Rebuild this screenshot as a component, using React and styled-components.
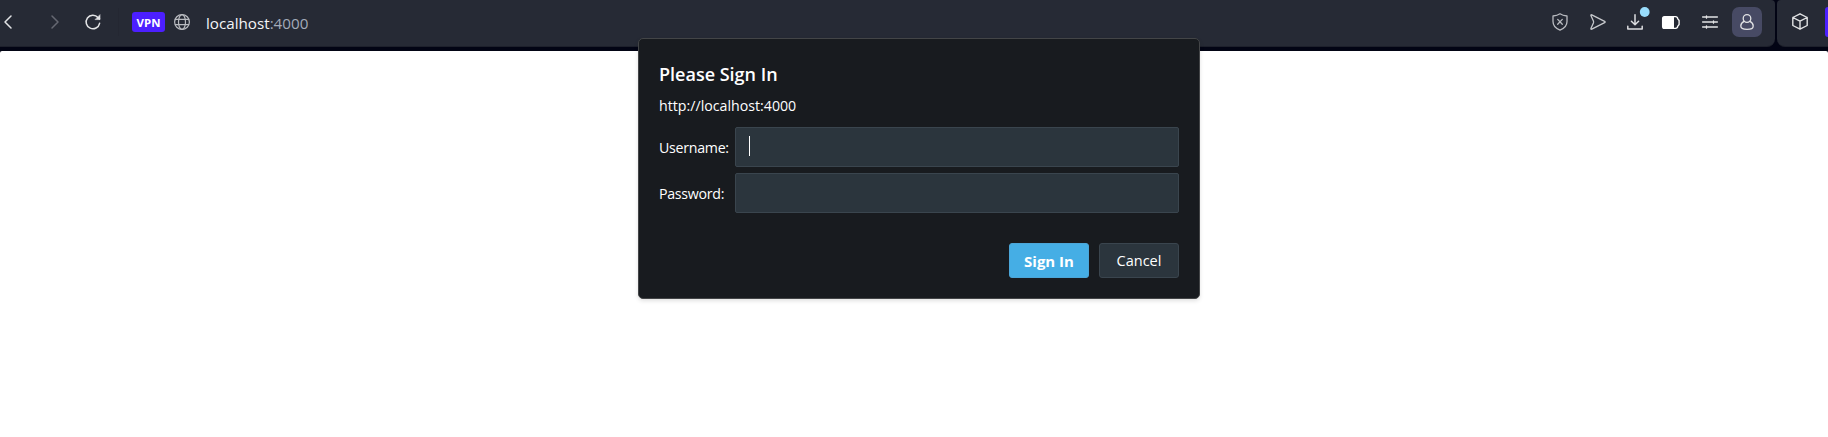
import React from "react";
import styled, { createGlobalStyle } from "styled-components";

const GlobalStyle = createGlobalStyle`
  * { box-sizing: border-box; }
  body { margin: 0; background: #fff; overflow: hidden; }
  button { font: inherit; }
`;

const Window = styled.div`
  position: relative;
  width: 100%;
  height: 437px;
  background: #020414;
  font-family: "Open Sans", "Noto Sans", sans-serif;
  overflow: hidden;
`;

const Page = styled.main`
  height: 386px;
  background: #fff;
  border-radius: 2px 2px 0 0;
`;

const Chrome = styled.header`
  display: flex;
  gap: 2px;
  height: 51px;
  padding-bottom: 4px;
  background: #020414;
`;

const Toolbar = styled.div`
  display: flex;
  flex: 1;
  justify-content: space-between;
  height: 47px;
  padding-right: 13px;
  background: #262a35;
  border-bottom: 1px solid #1d202b;
  border-radius: 0 4px 8px 0;
`;

const SidePanel = styled.div`
  display: flex;
  align-items: center;
  justify-content: space-between;
  width: 51px;
  height: 47px;
  padding: 0 0 3px 14px;
  background: #262a35;
  border-bottom: 1px solid #1d202b;
  border-radius: 4px 0 0 8px;
`;

const PurpleTab = styled.div`
  width: 3px;
  height: 30px;
  border-radius: 3px 0 0 3px;
  background: #4c1fff;
`;

const Group = styled.div`
  display: flex;
  align-items: center;
  height: 44px;
`;

const IconButton = styled.span`
  display: flex;
  align-items: center;
  justify-content: center;
  width: ${(p) => p.$w || 20}px;
  height: ${(p) => (p.$active ? 30 : 20)}px;
  margin-left: ${(p) => p.$gap || 0}px;
  color: ${(p) => p.$color || "#e2e3e5"};
  background: ${(p) => (p.$active ? "#474a64" : "transparent")};
  border-radius: 7px;
  svg { display: block; flex: none; overflow: visible; }
`;

const Divider = styled.span`
  width: 1px;
  height: 28px;
  margin-left: 16px;
  background: #242732;
`;

const VpnBadge = styled.span`
  width: 33px;
  height: 20px;
  margin-left: 13px;
  border-radius: 3px;
  background: #4c1fff;
  color: #fff;
  font-size: 11.4px;
  font-weight: 700;
  line-height: 22px;
  text-align: center;
`;

const Address = styled.span`
  margin-left: 16px;
  padding-top: 2px;
  color: #f4f5f7;
  font-size: 15.2px;
  line-height: 22px;
  span { color: #a3abb9; }
`;

const Dialog = styled.form`
  position: absolute;
  left: 638px;
  top: 38px;
  width: 562px;
  height: 261px;
  padding: 22px 20px 0 20px;
  border: 1px solid #434547;
  border-radius: 5px;
  background: #181b1f;
  color: #fff;
  box-shadow: 0 2px 4px rgba(0, 0, 0, 0.12);
`;

const Title = styled.h1`
  margin: 0;
  font-size: 18px;
  font-weight: 600;
  line-height: 26px;
`;

const Origin = styled.p`
  margin: 7px 0 10px;
  font-size: 14.2px;
  line-height: 23px;
`;

const Field = styled.label`
  display: flex;
  align-items: center;
  height: 40px;
  margin-bottom: 6px;
`;

const FieldName = styled.span`
  width: 76px;
  font-size: 14.2px;
  letter-spacing: -0.28px;
  white-space: nowrap;
`;

const FieldBox = styled.span`
  display: flex;
  flex: 1;
  height: 40px;
  padding: 8px 13px;
  border: 1px solid #3a454e;
  border-radius: 2px;
  background: #2b353d;
`;

const Caret = styled.span`
  width: 1px;
  height: 20px;
  background: #fff;
`;

const Actions = styled.div`
  display: flex;
  justify-content: flex-end;
  gap: 10px;
  margin-top: 30px;
`;

const Button = styled.button`
  width: 80px;
  height: 35px;
  padding: 0;
  border: 1px solid ${(p) => (p.$primary ? "#4ba6d8" : "#3a454e")};
  border-radius: 3px;
  background: ${(p) => (p.$primary ? "#45aee5" : "#2b353d")};
  color: #fff;
  font-size: ${(p) => (p.$primary ? 15 : 14.5)}px;
  font-weight: ${(p) => (p.$primary ? 700 : 400)};
`;

const Svg = ({ w, h, sw = 1.3, children }) => (
  <svg width={w} height={h} viewBox={`0 0 ${w} ${h}`} fill="none" stroke="currentColor" strokeWidth={sw} strokeLinecap="round" strokeLinejoin="round">
    {children}
  </svg>
);

const Back = () => <Svg w={8} h={14} sw={1.5}><path d="M7 1 1 7l6 6" /></Svg>;
const Forward = () => <Svg w={8} h={14} sw={1.5}><path d="m1 1 6 6-6 6" /></Svg>;
const Reload = () => (
  <Svg w={16} h={16} sw={1.5}>
    <path d="M14.6 9.3A6.8 6.8 0 1 1 13 3.4l1.5 1.5" />
    <path d="M15 1v4.6h-4.6z" fill="currentColor" strokeWidth="0.6" />
  </Svg>
);
const Globe = () => (
  <Svg w={16} h={16} sw={1.2}>
    <circle cx="8" cy="8" r="7.4" />
    <ellipse cx="8" cy="8" rx="3.5" ry="7.4" />
    <path d="M1.4 5.3h13.2M1.4 10.7h13.2" />
  </Svg>
);
const Shield = () => (
  <Svg w={16} h={18}>
    <path d="M8 .8c2 1.4 4.4 2 7 2.2v5.6c0 4-2.8 7-7 8.6C3.8 15.6 1 12.6 1 8.6V3C3.6 2.8 6 2.2 8 .8z" />
    <path d="m5.7 6.4 4.6 4.8m0-4.8-4.6 4.8" />
  </Svg>
);
const Send = () => (
  <Svg w={16} h={16}>
    <path d="M1.8.8 14.6 7.3q1.1.7 0 1.4L1.8 15.2q-1.3.4-.8-1L3.4 9q.4-1 0-2L1 1.8Q.5.4 1.8.8z" />
  </Svg>
);
const Download = () => (
  <Svg w={16} h={16} sw={1.5}>
    <path d="M8 .8v9.7M4.4 7.2 8 10.8l3.6-3.6M.8 12.2v2.9h14.4v-2.9" />
    <circle cx="17.7" cy="-2" r="4.9" fill="#99ddfc" stroke="none" />
  </Svg>
);
const Battery = () => (
  <Svg w={18} h={13}>
    <path d="M2.5.6h11q2 0 2.3 2.2l1.3 1.7v4l-1.3 1.7q-.3 2.2-2.3 2.2h-11Q.6 12.4.6 10.5v-8Q.6.6 2.5.6z" />
    <path d="M2.5.6H12v11.800H2.5Q.6 12.4.6 10.5v-8Q.6.6 2.5.6z" fill="currentColor" stroke="none" />
  </Svg>
);
const Sliders = () => (
  <Svg w={16} h={14}>
    <path d="M.6 2h14.8M.6 7h14.8M.6 12h14.8M4.5.8v2.4M11.5 5.8v2.4M4.5 10.8v2.4" />
  </Svg>
);
const Person = () => (
  <Svg w={14} h={16}>
    <circle cx="7" cy="4.5" r="3.8" />
    <path d="M4 7.4C2 8.4.8 10 .8 12c0 2.5 1.7 3.3 6.2 3.3s6.2-.8 6.2-3.3c0-2-1.2-3.6-3.2-4.6" />
  </Svg>
);
const Cube = () => (
  <Svg w={16} h={17} sw={1.4}>
    <path d="m8 .8 7.2 3.7v8L8 16.2.8 12.5v-8zM.8 4.5 8 8.2l7.2-3.7M8 8.2v8" />
  </Svg>
);

export default function App() {
  return (
    <>
      <GlobalStyle />
      <Window>
        <Chrome>
          <Toolbar>
            <Group>
              <IconButton $w={16}><Back /></IconButton>
              <IconButton $w={16} $gap={31} $color="#656872"><Forward /></IconButton>
              <IconButton $w={18} $gap={21}><Reload /></IconButton>
              <Divider />
              <VpnBadge>VPN</VpnBadge>
              <IconButton $w={16} $gap={9} $color="#b9bbc0"><Globe /></IconButton>
              <Address>localhost<span>:4000</span></Address>
            </Group>
            <Group>
              <IconButton $w={16} $color="#b9bbc0"><Shield /></IconButton>
              <IconButton $w={16} $gap={22} $color="#c6c8cc"><Send /></IconButton>
              <IconButton $w={16} $gap={21} $color="#dcdde0"><Download /></IconButton>
              <IconButton $w={18} $gap={19} $color="#fff"><Battery /></IconButton>
              <IconButton $w={16} $gap={22}><Sliders /></IconButton>
              <IconButton $w={30} $gap={14} $active><Person /></IconButton>
            </Group>
          </Toolbar>
          <SidePanel>
            <IconButton $w={18}><Cube /></IconButton>
            <PurpleTab />
          </SidePanel>
        </Chrome>
        <Page />
        <Dialog onSubmit={(e) => e.preventDefault()}>
          <Title>Please Sign In</Title>
          <Origin>http://localhost:4000</Origin>
          <Field>
            <FieldName>Username:</FieldName>
            <FieldBox><Caret /></FieldBox>
          </Field>
          <Field>
            <FieldName>Password:</FieldName>
            <FieldBox />
          </Field>
          <Actions>
            <Button $primary>Sign In</Button>
            <Button type="button">Cancel</Button>
          </Actions>
        </Dialog>
      </Window>
    </>
  );
}
